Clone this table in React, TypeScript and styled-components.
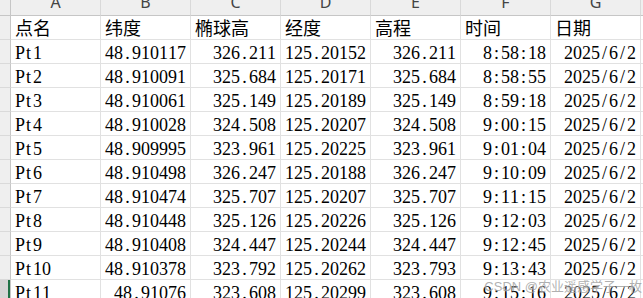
import React from 'react';
import styled, { createGlobalStyle } from 'styled-components';

const Global = createGlobalStyle`
  html, body { margin: 0; padding: 0; background: #fff; overflow: hidden; }
`;

const Sheet = styled.div`
  position: relative;
  width: 643px;
  height: 298px;
  overflow: hidden;
  display: grid;
  grid-template-columns: 11px repeat(8, 90px);
  grid-template-rows: 16px;
  grid-auto-rows: 24px;
  font-family: "Liberation Serif", "Noto Sans CJK SC", serif;
  font-size: 18px;
  color: #000;
`;

const Corner = styled.div`
  box-sizing: border-box;
  background: #eeeeee;
  border-right: 1px solid #c6c6c6;
  border-bottom: 1px solid #c6c6c6;
`;

const ColHead = styled.div`
  box-sizing: border-box;
  background: #efefef;
  border-right: 1px solid #d9d9d9;
  border-bottom: 1px solid #c6c6c6;
  display: flex;
  justify-content: center;
  align-items: flex-end;
  padding-bottom: 5px;
  overflow: hidden;
  font-family: "Noto Sans", "Liberation Sans", sans-serif;
  font-size: 16px;
  line-height: 1;
  color: #444;
`;

const RowHead = styled.div<{ $active?: boolean }>`
  box-sizing: border-box;
  background: ${(p) => (p.$active ? '#d5d5d5' : '#efefef')};
  border-right: 1px solid #c6c6c6;
  border-bottom: 1px solid #dadada;
  box-shadow: ${(p) => (p.$active ? 'inset -2px 0 0 #1e7145' : 'none')};
`;

const Cell = styled.div<{ $align: 'left' | 'right' }>`
  box-sizing: border-box;
  border-right: 1px solid #e1e1e1;
  border-bottom: 1px solid #e1e1e1;
  padding: 3px 4px 0;
  line-height: 20px;
  text-align: ${(p) => p.$align};
  white-space: nowrap;
  overflow: hidden;
`;

const Half = styled.span`
  display: inline-block;
  width: 0.5em;
  text-align: center;
`;

const Watermark = styled.div`
  position: absolute;
  right: 1px;
  bottom: 5px;
  font-family: "Liberation Sans", "Noto Sans CJK SC", sans-serif;
  font-size: 13px;
  line-height: 1;
  color: rgba(150, 150, 150, 0.75);
  text-shadow: 0 0 2px rgba(255, 255, 255, 0.9);
  white-space: nowrap;
  pointer-events: none;
`;

const Mono: React.FC<{ text: string }> = ({ text }) => (
  <>
    {Array.from(text).map((c, i) =>
      c.charCodeAt(0) < 128 ? <Half key={i}>{c}</Half> : <React.Fragment key={i}>{c}</React.Fragment>
    )}
  </>
);

const letters = ['A', 'B', 'C', 'D', 'E', 'F', 'G', 'H'];
const aligns: ('left' | 'right')[] = ['left', 'right', 'right', 'left', 'right', 'right', 'right', 'left'];

const header = ['点名', '纬度', '椭球高', '经度', '高程', '时间', '日期', ''];

const rows: string[][] = [
  ['Pt1', '48.910117', '326.211', '125.20152', '326.211', '8:58:18', '2025/6/2'],
  ['Pt2', '48.910091', '325.684', '125.20171', '325.684', '8:58:55', '2025/6/2'],
  ['Pt3', '48.910061', '325.149', '125.20189', '325.149', '8:59:18', '2025/6/2'],
  ['Pt4', '48.910028', '324.508', '125.20207', '324.508', '9:00:15', '2025/6/2'],
  ['Pt5', '48.909995', '323.961', '125.20225', '323.961', '9:01:04', '2025/6/2'],
  ['Pt6', '48.910498', '326.247', '125.20188', '326.247', '9:10:09', '2025/6/2'],
  ['Pt7', '48.910474', '325.707', '125.20207', '325.707', '9:11:15', '2025/6/2'],
  ['Pt8', '48.910448', '325.126', '125.20226', '325.126', '9:12:03', '2025/6/2'],
  ['Pt9', '48.910408', '324.447', '125.20244', '324.447', '9:12:45', '2025/6/2'],
  ['Pt10', '48.910378', '323.792', '125.20262', '323.793', '9:13:43', '2025/6/2'],
  ['Pt11', '48.91076', '323.608', '125.20299', '323.608', '9:15:16', '2025/6/2'],
];

export default function App() {
  return (
    <>
      <Global />
      <Sheet>
        <Corner />
        {letters.map((l) => (
          <ColHead key={l}>{l}</ColHead>
        ))}
        <RowHead />
        {header.map((h, i) => (
          <Cell key={i} $align="left">
            <Mono text={h} />
          </Cell>
        ))}
        {rows.map((r, ri) => (
          <React.Fragment key={ri}>
            <RowHead $active={ri === rows.length - 1} />
            {r.concat(['']).map((v, ci) => (
              <Cell key={ci} $align={aligns[ci]}>
                <Mono text={v} />
              </Cell>
            ))}
          </React.Fragment>
        ))}
        <Watermark>CSDN @农业遥感学子一枚</Watermark>
      </Sheet>
    </>
  );
}
